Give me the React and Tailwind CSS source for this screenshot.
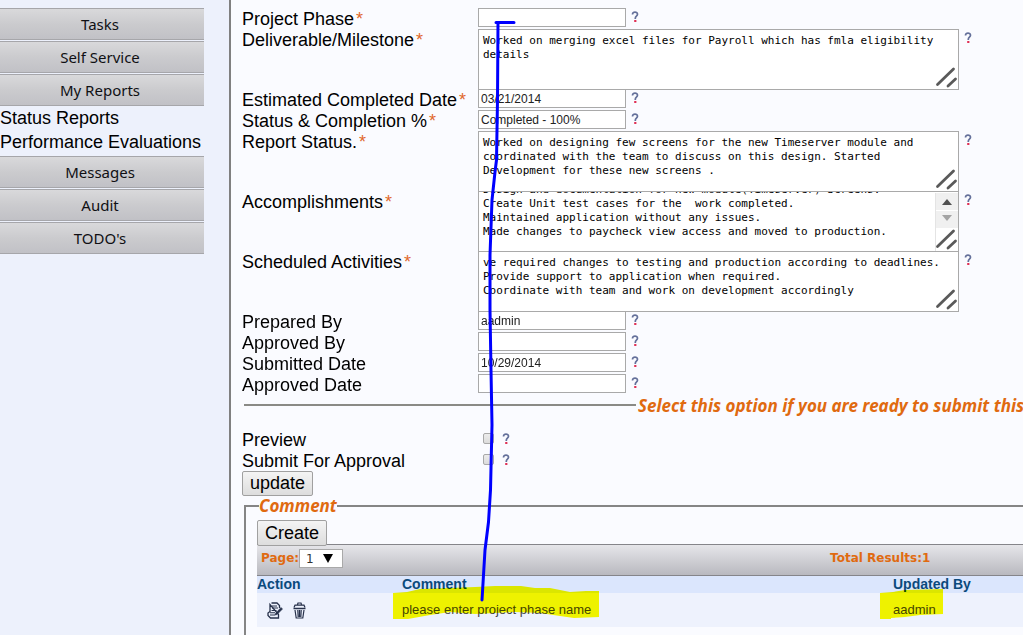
import React, { useEffect, useRef } from "react";

const navTop = ["Tasks", "Self Service", "My Reports"];
const navBottom = ["Messages", "Audit", "TODO's"];

function NavButton({ children }) {
  return (
    <button
      type="button"
      className="h-8 w-full border-y border-[#a6a6aa] bg-gradient-to-b from-[#d9d9db] via-[#cbcbce] to-[#c1c1c6] pr-1 text-center font-['Noto_Sans',sans-serif] text-[15px] leading-[30px] text-[#101014]"
    >
      {children}
    </button>
  );
}

function Help() {
  return (
    <svg viewBox="0 0 8 12" className="h-3 w-2 shrink-0" role="img" aria-label="Help">
      <path
        d="M1.500 3.400C1.500 1.900 2.600 1.200 4 1.200c1.400 0 2.500.8 2.500 2.100C6.500 5.200 4.300 5.200 4.300 7.200v.8"
        fill="none"
        stroke="#64709a"
        strokeWidth="1.700"
      />
      <rect x="3.200" y="9" width="2.200" height="2" fill="#e03055" />
    </svg>
  );
}

function Label({ id, required, children }) {
  return (
    <label htmlFor={id} className="w-[236px] shrink-0 whitespace-nowrap text-lg leading-[23px] text-black">
      {children}
      {required && <span className="pl-0.5 text-[#e0682c]">*</span>}
    </label>
  );
}

function TextRow({ id, label, required, value }) {
  return (
    <div className="relative flex h-[21px] items-start">
      <Label id={id} required={required}>{label}</Label>
      <input
        id={id}
        type="text"
        defaultValue={value}
        className="h-[19px] w-[148px] border border-[#a9a9a9] bg-white px-0.5 text-xs text-[#222]"
      />
      <div className="pl-[5px] pt-[3px]"><Help /></div>
    </div>
  );
}

function Grip() {
  return (
    <svg viewBox="0 0 24 22" className="absolute bottom-px right-px h-[22px] w-6" aria-hidden="true">
      <path d="M3.500 17.500 19.500 2M14 19 21.500 12" stroke="#5a5a5a" strokeWidth="2.800" strokeLinecap="round" />
    </svg>
  );
}

function AreaRow({ id, label, required, value, scroll = 0 }) {
  const ref = useRef(null);
  useEffect(() => {
    ref.current.scrollTop = scroll;
  }, [scroll]);
  return (
    <div className="flex h-[60px] items-start">
      <Label id={id} required={required}>{label}</Label>
      <div className="relative h-[61px] w-[481px]">
        <textarea
          id={id}
          ref={ref}
          defaultValue={value}
          className="block h-full w-full resize-none overflow-auto whitespace-pre border border-[#a9a9a9] bg-white p-1 font-['DejaVu_Sans_Mono',monospace] text-[11px] leading-[14px] text-black [scrollbar-width:none]"
        />
        {scroll > 0 && (
          <div className="absolute right-0 top-0.5 h-[58px] w-6 border-l border-r border-[#e4e4e4] border-r-[#a9a9a9] bg-white">
            <svg viewBox="0 0 22 36" className="block h-9 w-[22px]" aria-hidden="true">
              <path d="M0 0h22v17H0zM0 18h22v17H0z" fill="#f0f0f0" />
              <path d="M6 12 11 6l5 6z" fill="#505050" />
              <path d="M6 22h10l-5 6z" fill="#a3a3a3" />
            </svg>
          </div>
        )}
        <Grip />
      </div>
      <div className="pl-[5px] pt-[3px]"><Help /></div>
    </div>
  );
}

function CheckRow({ id, label }) {
  return (
    <div className="flex h-[21px] items-start">
      <Label id={id}>{label}</Label>
      <input
        id={id}
        type="checkbox"
        className="ml-[5px] mt-1 h-[11px] w-[11px] appearance-none rounded-[2px] border border-[#a8a8a8] bg-gradient-to-b from-[#ececec] to-[#dcdcdc]"
      />
      <div className="pl-2 pt-1"><Help /></div>
    </div>
  );
}

const buttonClass =
  "block rounded-[2px] border border-[#a0a0a0] bg-gradient-to-b from-[#f4f4f4] to-[#dddddd] px-[7px] text-lg text-black";

function EditIcon() {
  return (
    <svg viewBox="0 0 16 17" className="h-[17px] w-4" fill="none" stroke="#26304a" aria-hidden="true">
      <path d="M4.500 1h5.500L12.500 3.500V6M11.500 12.500V16H3.500L1 13.500V11L3 9.500V2.500z" strokeWidth="1.300" />
      <path d="M5 4h5M5 6h6M4.500 8.500h5M3 10.800h5M3 13h5" strokeWidth="1.100" />
      <path d="M8.500 11.500 14 5.500l1.500 1.500-5.500 5.500-2 .5z" fill="#26304a" strokeWidth=".6" />
    </svg>
  );
}

function TrashIcon() {
  return (
    <svg viewBox="0 0 13 17" className="h-[17px] w-[13px]" fill="none" stroke="#26304a" aria-hidden="true">
      <path d="M4.500 2.500 5 1h3l.5 1.500M1 5.500 2 3.200h9l1 2.300" strokeWidth="1.200" />
      <path d="M.5 6.500h12" strokeWidth="1.500" />
      <path d="M2 8l1.200 8h6.600L11 8M4.800 8l.4 7M6.500 8v7M8.200 8l-.4 7" strokeWidth="1.200" />
    </svg>
  );
}

function Markup() {
  return (
    <>
      <svg className="pointer-events-none absolute left-0 top-0 h-[635px] w-[1023px] mix-blend-multiply" viewBox="0 0 1023 635" aria-hidden="true">
        <path
          d="M393 593 407 592 420 589 450 588 475 587 495 586 521 586 535 588 550 588 570 592 586 591H599V617L574 618 560 616 540 613 515 612 475 614 450 612 430 615 408 619H393zM880 593 893 592 905 590 943 589V614L920 615 905 617 891 618V619H880z"
          fill="#ffff00"
        />
      </svg>
      <svg className="pointer-events-none absolute left-0 top-0 h-[635px] w-[1023px]" viewBox="0 0 1023 635" aria-hidden="true">
        <path
          d="M496 22.500H514M498 22.500 497.500 100 496.500 160 495 172 492 200 490 255V310L491 370 492 425 490.500 490 488.500 522 485 550 483.500 575 482 600"
          fill="none"
          stroke="#0000ff"
          strokeWidth="3"
          strokeLinecap="round"
          strokeLinejoin="round"
        />
      </svg>
    </>
  );
}

const legendClass = "font-['Noto_Sans',sans-serif] text-[17px] font-bold italic text-[#e06a10]";

export default function App() {
  return (
    <div className="relative flex min-h-screen overflow-hidden bg-[#fafbff] font-['Liberation_Sans',Arial,sans-serif]">
      <aside className="w-[231px] shrink-0 border-r-2 border-[#808080] bg-[#edf1fc] pt-2">
        <nav className="flex w-[204px] flex-col gap-px">
          {navTop.map((n) => <NavButton key={n}>{n}</NavButton>)}
          <div className="-mt-px flex flex-col whitespace-nowrap pb-px text-lg leading-6 text-black">
            <a href="#status">Status Reports</a>
            <a href="#evaluations">Performance Evaluations</a>
          </div>
          {navBottom.map((n) => <NavButton key={n}>{n}</NavButton>)}
        </nav>
      </aside>

      <main className="min-w-0 flex-1 overflow-hidden pl-[11px] pt-2">
        <form onSubmit={(e) => e.preventDefault()}>
          <TextRow id="phase" label="Project Phase" required value="" />
          <AreaRow id="milestone" label="Deliverable/Milestone" required
            value={"Worked on merging excel files for Payroll which has fmla eligibility\ndetails"} />
          <TextRow id="estimated" label="Estimated Completed Date" required value="03/21/2014" />
          <TextRow id="completion" label="Status & Completion %" required value="Completed - 100%" />
          <AreaRow id="report" label="Report Status." required
            value={"Worked on designing few screens for the new Timeserver module and\ncoordinated with the team to discuss on this design. Started\nDevelopment for these new screens ."} />
          <AreaRow id="accomplishments" label="Accomplishments" required scroll={13}
            value={"Design and documentation for new module(Timeserver) Screens.\nCreate Unit test cases for the  work completed.\nMaintained application without any issues.\nMade changes to paycheck view access and moved to production.\n"} />
          <AreaRow id="scheduled" label="Scheduled Activities" required
            value={"ve required changes to testing and production according to deadlines.\nProvide support to application when required.\nCoordinate with team and work on development accordingly"} />
          <TextRow id="prepared" label="Prepared By" value="aadmin" />
          <TextRow id="approvedby" label="Approved By" value="" />
          <TextRow id="submitted" label="Submitted Date" value="10/29/2014" />
          <TextRow id="approved" label="Approved Date" value="" />

          <div className="flex h-[34px] items-start">
            <hr className="ml-0.5 mt-[9px] w-[392px] shrink-0 border-t-2 border-[#8a8a86]" />
            <p className={`${legendClass} whitespace-nowrap pl-0.5 leading-[22px]`}>
              Select this option if you are ready to submit this report
            </p>
          </div>
          <CheckRow id="preview" label="Preview" />
          <CheckRow id="approval" label="Submit For Approval" />
          <button type="submit" className={`${buttonClass} h-[25px] leading-[23px]`}>update</button>
        </form>

        <fieldset className="ml-0.5 h-[150px] min-w-0 border-l-2 border-t-2 border-[#858585] pl-[11px]">
          <legend className={`${legendClass} ml-0.5 leading-5`}>Comment</legend>
          <button type="button" className={`${buttonClass} relative mt-1 h-[26px] leading-6`}>Create</button>
          <div className="-mt-0.5 flex h-8 items-start border-y border-[#85858a] bg-gradient-to-b from-[#e6e6ea] to-[#b9b9bf] pl-1 pt-1 font-['DejaVu_Sans',Verdana,sans-serif] text-xs font-bold text-[#e06a10]">
            <label htmlFor="page" className="leading-[18px]">Page:</label>
            <div className="relative">
              <select id="page" className="h-[19px] w-11 appearance-none border border-[#a9a9a9] bg-white pl-1.5 text-xs font-normal leading-4 text-[#333]">
                <option>1</option>
              </select>
              <svg viewBox="0 0 10 9" className="pointer-events-none absolute right-2.5 top-[5px] h-[9px] w-2.5" aria-hidden="true">
                <path d="M0 0h10L5 9z" fill="#000" />
              </svg>
            </div>
            <span className="ml-[487px] leading-[18px]">Total Results:1</span>
          </div>
          <table className="w-full table-fixed border-collapse text-left">
            <colgroup>
              <col className="w-[145px]" />
              <col className="w-[491px]" />
              <col />
            </colgroup>
            <thead>
              <tr className="h-[17px] bg-[#dbe6fd] text-sm leading-[17px] text-[#0b4a7c]">
                <th className="p-0">Action</th>
                <th className="p-0">Comment</th>
                <th className="whitespace-nowrap p-0">Updated By</th>
              </tr>
            </thead>
            <tbody>
              <tr className="h-[34px] bg-[#eef2fd] text-[13px] text-[#444]">
                <td className="p-0">
                  <div className="flex items-center gap-2.5 pl-2.5">
                    <button type="button" aria-label="Edit"><EditIcon /></button>
                    <button type="button" aria-label="Delete"><TrashIcon /></button>
                  </div>
                </td>
                <td className="p-0">please enter project phase name</td>
                <td className="p-0">aadmin</td>
              </tr>
            </tbody>
          </table>
        </fieldset>
      </main>
      <Markup />
    </div>
  );
}
